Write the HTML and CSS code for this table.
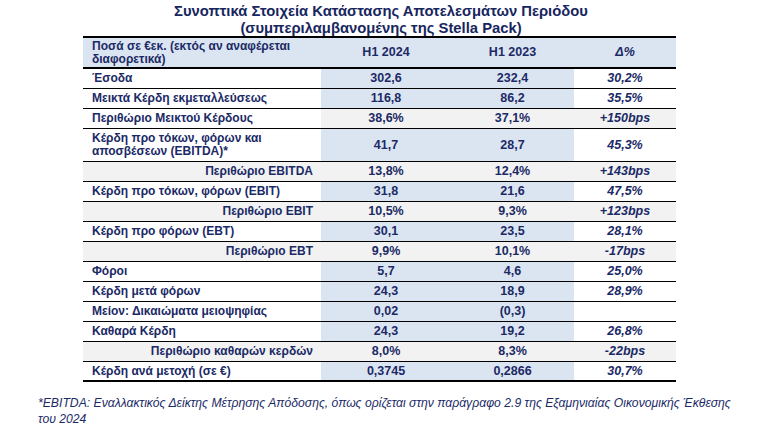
FILE: index.html
```html
<!DOCTYPE html>
<html lang="el">
<head>
<meta charset="utf-8">
<link rel="stylesheet" href="styles.css">
</head>
<body>
<div class="page">
  <h1 class="title">Συνοπτικά Στοιχεία Κατάστασης Αποτελεσμάτων Περιόδου<br>(συμπεριλαμβανομένης της Stella Pack)</h1>
  <div class="table">
    <div class="row head">
      <div class="c label">Ποσά σε €εκ. (εκτός αν αναφέρεται<br>διαφορετικά)</div>
      <div class="c">H1 2024</div>
      <div class="c">H1 2023</div>
      <div class="c delta">Δ%</div>
    </div>
    <div class="row"><div class="c label">Έσοδα</div><div class="c num">302,6</div><div class="c num">232,4</div><div class="c delta">30,2%</div></div>
    <div class="row"><div class="c label">Μεικτά Κέρδη εκμεταλλεύσεως</div><div class="c num">116,8</div><div class="c num">86,2</div><div class="c delta">35,5%</div></div>
    <div class="row shade"><div class="c label white">Περιθώριο Μεικτού Κέρδους</div><div class="c num">38,6%</div><div class="c num">37,1%</div><div class="c delta">+150bps</div></div>
    <div class="row tall"><div class="c label">Κέρδη προ τόκων, φόρων και<br>αποσβέσεων (EBITDA)*</div><div class="c num">41,7</div><div class="c num">28,7</div><div class="c delta">45,3%</div></div>
    <div class="row shade"><div class="c label right">Περιθώριο EBITDA</div><div class="c num">13,8%</div><div class="c num">12,4%</div><div class="c delta">+143bps</div></div>
    <div class="row"><div class="c label">Κέρδη προ τόκων, φόρων (EBIT)</div><div class="c num">31,8</div><div class="c num">21,6</div><div class="c delta">47,5%</div></div>
    <div class="row shade"><div class="c label right">Περιθώριο EBIT</div><div class="c num">10,5%</div><div class="c num">9,3%</div><div class="c delta">+123bps</div></div>
    <div class="row"><div class="c label">Κέρδη προ φόρων (EBT)</div><div class="c num">30,1</div><div class="c num">23,5</div><div class="c delta">28,1%</div></div>
    <div class="row shade"><div class="c label right">Περιθώριο EBT</div><div class="c num">9,9%</div><div class="c num">10,1%</div><div class="c delta">-17bps</div></div>
    <div class="row"><div class="c label">Φόροι</div><div class="c num">5,7</div><div class="c num">4,6</div><div class="c delta">25,0%</div></div>
    <div class="row"><div class="c label">Κέρδη μετά φόρων</div><div class="c num">24,3</div><div class="c num">18,9</div><div class="c delta">28,9%</div></div>
    <div class="row"><div class="c label">Μείον: Δικαιώματα μειοψηφίας</div><div class="c num">0,02</div><div class="c num">(0,3)</div><div class="c delta"></div></div>
    <div class="row"><div class="c label">Καθαρά Κέρδη</div><div class="c num">24,3</div><div class="c num">19,2</div><div class="c delta">26,8%</div></div>
    <div class="row shade"><div class="c label right">Περιθώριο καθαρών κερδών</div><div class="c num">8,0%</div><div class="c num">8,3%</div><div class="c delta">-22bps</div></div>
    <div class="row last"><div class="c label">Κέρδη ανά μετοχή (σε €)</div><div class="c num">0,3745</div><div class="c num">0,2866</div><div class="c delta">30,7%</div></div>
  </div>
  <p class="note">*EBITDA: Εναλλακτικός Δείκτης Μέτρησης Απόδοσης, όπως ορίζεται στην παράγραφο 2.9 της Εξαμηνιαίας Οικονομικής Έκθεσης<br>του 2024</p>
</div>
</body>
</html>
```

FILE: styles.css
```css
html, body {
  margin: 0;
  padding: 0;
  background: #ffffff;
}
.page {
  width: 762px;
  height: 428px;
  font-family: "Liberation Sans", Arial, sans-serif;
  color: #1b2a66;
  padding-top: 3px;
  box-sizing: border-box;
}
.title {
  margin: 0 0 -1px 0;
  text-align: center;
  font-size: 14.8px;
  line-height: 17px;
  font-weight: bold;
  color: #17265e;
}
.table {
  margin: 0 0 0 83px;
  width: 593px;
  border-top: 2px solid #000;
  font-size: 12.5px;
  font-weight: bold;
}
.row {
  display: grid;
  grid-template-columns: 238px 130px 123px 102px;
  height: 20px;
  box-sizing: border-box;
  border-bottom: 1px solid #000;
  line-height: 13px;
}
.row.head {
  height: 31px;
  border-bottom: 2px solid #000;
  background: #dbe5f1;
}
.row.tall { height: 33px; }
.row.last { border-bottom: 2px solid #000; }
.c {
  display: flex;
  align-items: center;
  justify-content: center;
  text-align: center;
}
.c.label {
  justify-content: flex-start;
  text-align: left;
  padding-left: 9px;
  background: #ffffff;
  font-size: 12px;
}
.head .c.label { background: transparent; }
.c.num { background: #dbe5f1; }
.c.delta { font-style: italic; background: #ffffff; }
.head .c.delta { background: transparent; }
.row.shade .c { background: #f2f2f2; }
.row.shade .c.white { background: #ffffff; }
.c.label.right {
  justify-content: flex-end;
  padding-right: 8px;
}
.note {
  margin: 13px 0 0 38px;
  font-size: 12.2px;
  line-height: 16px;
  font-style: italic;
}
```
